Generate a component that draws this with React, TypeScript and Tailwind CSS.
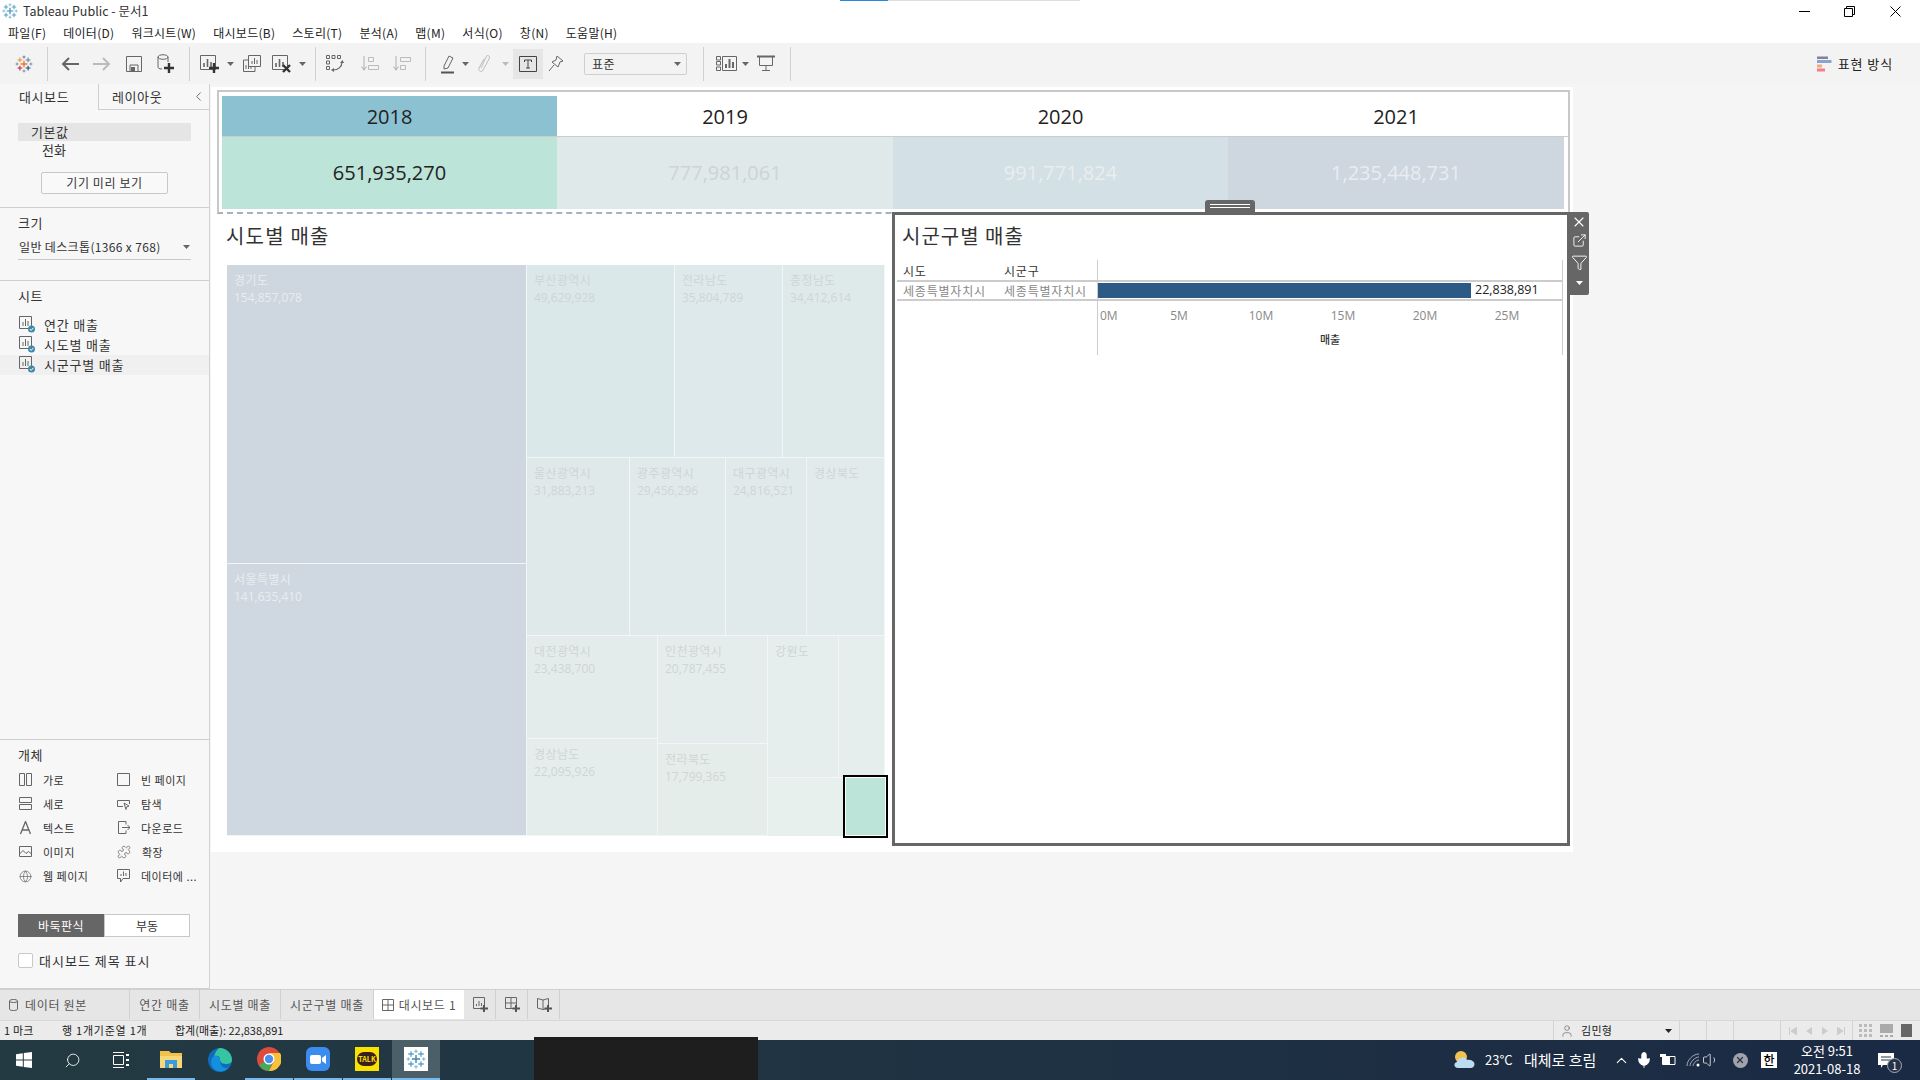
import { ChevronLeft, ChevronUp, ExternalLink, Filter, Globe, Mic, Puzzle, Search, User, Volume1, X } from 'lucide-react';

type IconProps = { c?: string };

function Svg({ w = 20, h = 20, children }: { w?: number; h?: number; children: React.ReactNode }) {
  return (
    <svg width={w} height={h} viewBox={`0 0 ${w} ${h}`} fill="none" className="shrink-0">
      {children}
    </svg>
  );
}

function Cross({ x, y, s, color, t = 1.6 }: { x: number; y: number; s: number; color: string; t?: number }) {
  return <path d={`M${x - s} ${y}H${x + s}M${x} ${y - s}V${y + s}`} stroke={color} strokeWidth={t} />;
}

function TableauLogo() {
  return (
    <svg width="18" height="18" viewBox="0 0 22 22" fill="none" className="shrink-0">
      <Cross x={11} y={11} s={4} color="#e8762d" t={1.6} />
      <Cross x={6} y={6} s={3} color="#e8962d" t={1.3} />
      <Cross x={16} y={6} s={3} color="#5b879b" t={1.3} />
      <Cross x={6} y={16} s={3} color="#c72035" t={1.3} />
      <Cross x={16} y={16} s={3} color="#1f447e" t={1.3} />
      <Cross x={11} y={2.5} s={1.8} color="#5b6591" t={1} />
      <Cross x={11} y={19.5} s={1.8} color="#5b879b" t={1} />
      <Cross x={2.5} y={11} s={1.8} color="#5f7fa8" t={1} />
      <Cross x={19.5} y={11} s={1.8} color="#59879b" t={1} />
    </svg>
  );
}

function TableauBlue({ size = 16 }: { size?: number }) {
  return (
    <svg width={size} height={size} viewBox="0 0 22 22" fill="none" className="shrink-0">
      <Cross x={11} y={11} s={4.5} color="#3d8bb5" t={1.6} />
      <Cross x={5.5} y={5.5} s={3} color="#5ba0c5" t={1.4} />
      <Cross x={16.5} y={5.5} s={3} color="#5ba0c5" t={1.4} />
      <Cross x={5.5} y={16.5} s={3} color="#5ba0c5" t={1.4} />
      <Cross x={16.5} y={16.5} s={3} color="#5ba0c5" t={1.4} />
      <Cross x={11} y={2.5} s={2} color="#7db4d0" t={1.2} />
      <Cross x={11} y={19.5} s={2} color="#7db4d0" t={1.2} />
      <Cross x={2.5} y={11} s={2} color="#7db4d0" t={1.2} />
      <Cross x={19.5} y={11} s={2} color="#7db4d0" t={1.2} />
    </svg>
  );
}

function Caret({ c = '#666' }: IconProps) {
  return (
    <Svg w={7} h={4}>
      <path d="M0 0H7L3.5 4Z" fill={c} />
    </Svg>
  );
}

function Plus({ x, y }: { x: number; y: number }) {
  return <path d={`M${x - 5} ${y}H${x + 5}M${x} ${y - 5}V${y + 5}`} stroke="#333" strokeWidth={2.4} />;
}

function ToolSep({ className }: { className: string }) {
  return <div className={`h-[34px] w-px shrink-0 bg-[#d0d0d0] ${className}`} />;
}

function Toolbar() {
  return (
    <div className="flex h-[41px] shrink-0 items-center bg-[#f3f3f3] pl-[13px]">
      <div className="flex w-[22px] justify-center">
        <TableauLogo />
      </div>
      <ToolSep className="ml-[12px]" />
      <div className="ml-[6px] flex w-[32px] justify-center">
        <Svg w={18} h={14}>
          <path d="M18 7H2M8 1L2 7L8 13" stroke="#666" strokeWidth={2} />
        </Svg>
      </div>
      <div className="flex w-[32px] justify-center">
        <Svg w={18} h={14}>
          <path d="M0 7H16M10 1L16 7L10 13" stroke="#bbb" strokeWidth={2} />
        </Svg>
      </div>
      <div className="flex w-[32px] justify-center">
        <Svg w={16} h={16}>
          <path d="M.5.5H15.5V15.5H.5Z" stroke="#666" />
          <path d="M4 15V9H12V15" stroke="#666" />
          <path d="M5 11H9V15H5Z" fill="#666" />
        </Svg>
      </div>
      <div className="flex w-[32px] justify-center">
        <Svg w={18} h={20}>
          <path d="M1 3C1 0 11 0 11 3V8M1 3V13C1 14 2 15 5 15M1 3C1 6 11 6 11 3" stroke="#666" />
          <Plus x={12} y={14} />
        </Svg>
      </div>
      <ToolSep className="ml-[7px]" />
      <div className="ml-[5px] flex w-[30px] justify-center">
        <Svg w={20} h={18}>
          <path d="M.5.5H15.5V14.5H.5Z" stroke="#666" />
          <path d="M4 12V8M7.5 12V4M11 12V7" stroke="#666" strokeWidth={1.6} />
          <Plus x={14} y={13} />
        </Svg>
      </div>
      <div className="flex w-[10px] justify-center">
        <Caret />
      </div>
      <div className="ml-[2px] flex w-[30px] justify-center">
        <Svg w={18} h={18}>
          <path d="M5.5 .5H17.5V11.5H5.5Z" stroke="#666" />
          <path d="M5 5H.5V16.5H12V12" stroke="#666" />
          <path d="M9 9V6M11.5 9V3M14 9V5M3 14V10M5.5 14V11M8 14V12" stroke="#666" />
        </Svg>
      </div>
      <div className="flex w-[30px] justify-center">
        <Svg w={20} h={18}>
          <path d="M.5.5H15.5V14.5H.5Z" stroke="#666" />
          <path d="M4 12V8M7.5 12V4M11 12V7" stroke="#666" strokeWidth={1.6} />
          <path d="M11 10L18 17M18 10L11 17" stroke="#333" strokeWidth={2.4} />
        </Svg>
      </div>
      <div className="flex w-[10px] justify-center">
        <Caret />
      </div>
      <ToolSep className="ml-[8px]" />
      <div className="ml-[4px] flex w-[30px] justify-center">
        <Svg w={18} h={18}>
          <path d="M.5.5H3.5V3.5H.5ZM6 .5H9V3.5H6ZM11.5 .5H14.5V3.5H11.5ZM.5 6H3.5V9H.5ZM.5 11.5H3.5V14.5H.5Z" stroke="#666" />
          <path d="M16 7C16 12 12 15 7 15" stroke="#666" strokeWidth={1.2} />
          <path d="M14 8L16.5 5L18 8ZM8 13V17L5 15Z" fill="#666" />
        </Svg>
      </div>
      <div className="ml-[5px] flex w-[30px] justify-center">
        <Svg w={18} h={16}>
          <path d="M3 0V13M.5 10.5L3 14L5.5 10.5" stroke="#bbb" strokeWidth={1.2} />
          <path d="M7.5 1.5H12.5V5.5H7.5ZM7.5 9.5H17.5V13.5H7.5Z" stroke="#bbb" />
        </Svg>
      </div>
      <div className="ml-[2px] flex w-[30px] justify-center">
        <Svg w={18} h={16}>
          <path d="M3 0V13M.5 10.5L3 14L5.5 10.5" stroke="#bbb" strokeWidth={1.2} />
          <path d="M7.5 1.5H17.5V5.5H7.5ZM7.5 9.5H12.5V13.5H7.5Z" stroke="#bbb" />
        </Svg>
      </div>
      <ToolSep className="ml-[8px]" />
      <div className="ml-[9px] flex w-[26px] justify-center">
        <Svg w={14} h={20}>
          <path d="M3 12L8 2L12 4L7 14L3 15Z" stroke="#666" />
          <path d="M0 18.5H13" stroke="#555" strokeWidth={2} />
        </Svg>
      </div>
      <div className="flex w-[9px] justify-center">
        <Caret />
      </div>
      <div className="ml-[1px] flex w-[26px] justify-center">
        <Svg w={14} h={20}>
          <path d="M4 14L9 3C10 0 14 2 12 5L6 16C5 19 1 17 2 14L7 5" stroke="#bbb" />
        </Svg>
      </div>
      <div className="ml-[3px] flex w-[10px] justify-center">
        <Caret c="#bbb" />
      </div>
      <div className="ml-[3px] flex h-[30px] w-[30px] items-center justify-center bg-[#e6e6e6]">
        <Svg w={18} h={16}>
          <path d="M.5.5H17.5V15.5H.5Z" stroke="#444" />
          <path d="M5.5 6V4H12.5V6M9 4V12M7 12H11" stroke="#444" />
        </Svg>
      </div>
      <div className="flex w-[26px] justify-center">
        <Svg w={16} h={18}>
          <path d="M9 1L15 6L12 7L10 12L4 7L8 5ZM6 10L1 16" stroke="#666" />
        </Svg>
      </div>
      <div className="ml-[15px] flex h-[22px] w-[103px] items-center justify-between rounded-[2px] border border-[#cfcfcf] bg-[#f3f3f3] pr-[5px] pl-[7px] text-[12px] tracking-[0.4px] text-[#333]">
        표준
        <Caret />
      </div>
      <ToolSep className="ml-[16px]" />
      <div className="ml-[12px]">
        <Svg w={21} h={15}>
          <path d="M.5.5H4.5V4H.5ZM.5 5.5H4.5V9H.5ZM.5 11H4.5V14.5H.5Z" stroke="#666" />
          <path d="M6.5.5H20.5V14.5H6.5Z" stroke="#666" />
          <path d="M10 12V8M13.5 12V3M17 12V6" stroke="#666" strokeWidth={2} />
        </Svg>
      </div>
      <div className="ml-[3px] flex w-[10px] justify-center">
        <Caret />
      </div>
      <div className="ml-[7px]">
        <Svg w={18} h={17}>
          <path d="M0 1.5H18" stroke="#666" strokeWidth={2} />
          <path d="M2.5 2V10.5H15.5V2M9 11V15M5 15.5H13" stroke="#666" />
        </Svg>
      </div>
      <ToolSep className="ml-[15px]" />
      <div className="ml-auto flex items-center gap-[6px] pr-[27px] text-[13px] tracking-[0.9px] text-[#222]">
        <svg width="15" height="16" viewBox="0 0 15 16" className="shrink-0">
          <path d="M0 .5H11V3H0Z" fill="#8e7ba0" />
          <path d="M0 4H14.5V7H0Z" fill="#84a7cf" />
          <path d="M0 8.5H5V11.5H0Z" fill="#f3a97c" />
          <path d="M0 12.5H8V15.5H0Z" fill="#f27f86" />
        </svg>
        표현 방식
      </div>
    </div>
  );
}

function SheetIcon() {
  return (
    <Svg w={17} h={17}>
      <path d="M.5.5H12.5V12.5H.5Z" stroke="#666" />
      <path d="M4 10V6M6.5 10V3M9 10V5" stroke="#666" />
      <circle cx={12.5} cy={13} r={3.5} fill="#3f88a8" />
      <path d="M10.8 13L12.2 14.4L14.4 11.8" stroke="#fff" />
    </Svg>
  );
}

function LeftPanel() {
  const sheets = ['연간 매출', '시도별 매출', '시군구별 매출'];
  return (
    <div className="flex w-[210px] shrink-0 flex-col border-r border-[#d2d2d2] bg-[#f7f7f7] text-[13px] text-[#333]">
      <div className="flex h-[26px] shrink-0">
        <div className="flex w-[98px] items-center pl-[19px] tracking-[0.6px]">대시보드</div>
        <div className="flex flex-1 items-center justify-between border-b border-l border-[#cfcfcf] pr-[3px] pl-[13px] tracking-[0.6px]">
          레이아웃
          <ChevronLeft size={15} strokeWidth={1.5} color="#666" />
        </div>
      </div>
      <div className="h-[98px] shrink-0 border-b border-[#d0d0d0] pt-[13px]">
        <div className="mx-[18px] flex h-[18px] items-center bg-[#e5e5e5] pb-[1px] pl-[13px] tracking-[0.5px]">기본값</div>
        <div className="flex h-[18px] items-center pb-[1px] pl-[42px]">전화</div>
        <div className="mt-[13px] ml-[41px] flex h-[22px] w-[127px] items-center justify-center rounded-[2px] border border-[#c8c8c8] bg-[#f9f9f9] text-[12px] tracking-[0.6px]">
          기기 미리 보기
        </div>
      </div>
      <div className="h-[73px] shrink-0 border-b border-[#d0d0d0] px-[18px] pt-[6px]">
        <div className="h-[18px] leading-[17px] tracking-[0.5px]">크기</div>
        <div className="mt-[6px] flex h-[22px] items-center justify-between border-b border-[#c8c8c8] pr-[1px] pb-[3px] pl-[1px] text-[12px] tracking-[0.35px]">
          일반 데스크톱(1366 x 768)
          <Caret />
        </div>
      </div>
      <div className="h-[459px] shrink-0 border-b border-[#d0d0d0] pt-[6px]">
        <div className="h-[18px] pl-[18px] leading-[17px] tracking-[0.5px]">시트</div>
        <div className="mt-[10px]">
          {sheets.map((s, i) => (
            <div
              key={s}
              className={`flex h-[20px] items-center gap-[8px] pb-[1px] pl-[19px] tracking-[0.8px] ${i === 2 ? 'bg-[#f0f0f0]' : ''}`}
            >
              <SheetIcon />
              {s}
            </div>
          ))}
        </div>
      </div>
      <div className="flex-1 border-b border-[#d0d0d0] pt-[6px]">
        <div className="h-[18px] pl-[18px] leading-[17px] tracking-[0.5px]">개체</div>
        <div className="mt-[4px] grid grid-cols-[98px_1fr] pl-[19px] text-[11px] tracking-[0.5px] text-[#333]">
          <ObjItem label="가로">
            <path d="M.5.5H5.5V12.5H.5ZM7.5.5H12.5V12.5H7.5Z" stroke="#666" />
          </ObjItem>
          <ObjItem label="빈 페이지">
            <path d="M.5.5H12.5V12.5H.5Z" stroke="#666" />
          </ObjItem>
          <ObjItem label="세로">
            <path d="M.5.5H12.5V5.5H.5ZM.5 7.5H12.5V12.5H.5Z" stroke="#666" />
          </ObjItem>
          <ObjItem label="탐색">
            <path d="M6 9.5H.5V3.5H12.5V7M7 6L12 9L9.5 10L9 12.5Z" stroke="#666" fill="none" />
          </ObjItem>
          <ObjItem label="텍스트">
            <path d="M1.5 13L6.5.5L11.5 13M3.5 9H9.5" stroke="#666" strokeWidth={1.3} />
          </ObjItem>
          <ObjItem label="다운로드">
            <path d="M9 3.5V.5H1.5V12.5H9V9.5M5 6.5H13M10.5 4L13 6.5L10.5 9" stroke="#666" />
          </ObjItem>
          <ObjItem label="이미지">
            <path d="M.5 1.5H12.5V11.5H.5ZM.5 9L4 5.5L7 8.5L9.5 6.5L12.5 9" stroke="#666" />
          </ObjItem>
          <div className="flex h-[24px] items-center gap-[11px]">
            <Puzzle size={14} strokeWidth={1.3} color="#666" />
            확장
          </div>
          <div className="flex h-[24px] items-center gap-[11px]">
            <Globe size={13} strokeWidth={1.3} color="#666" />
            웹 페이지
          </div>
          <ObjItem label="데이터에 ...">
            <path d="M.5.5H12.5V9.5H6L3.5 13V9.5H.5ZM4 7V5M6.5 7V2.5M9 7V4" stroke="#666" fill="none" />
          </ObjItem>
        </div>
        <div className="mt-[26px] ml-[18px] flex h-[23px] w-[172px] text-[12px]">
          <div className="flex w-[86px] items-center justify-center bg-[#666] tracking-[0.5px] text-white">바둑판식</div>
          <div className="flex flex-1 items-center justify-center border border-[#c8c8c8] bg-white">부동</div>
        </div>
        <div className="mt-[14px] ml-[18px] flex items-center gap-[6px] text-[13px] tracking-[1px]">
          <div className="h-[15px] w-[15px] rounded-[2px] border border-[#c8c8c8] bg-white" />
          대시보드 제목 표시
        </div>
      </div>
    </div>
  );
}

function ObjItem({ label, children }: { label: string; children: React.ReactNode }) {
  return (
    <div className="flex h-[24px] items-center gap-[11px]">
      <Svg w={13} h={14}>
        {children}
      </Svg>
      {label}
    </div>
  );
}

function YearCell({ year, active, className }: { year: string; active?: boolean; className: string }) {
  return (
    <div
      className={`flex items-center justify-center pt-[2px] text-[20px] font-medium text-[#222] ${className} ${active ? 'bg-[#8cc1d2]' : 'bg-white'}`}
    >
      {year}
    </div>
  );
}

function Cell({
  name,
  value,
  className,
}: {
  name?: string;
  value?: string;
  className: string;
}) {
  return (
    <div className={`border-r border-b border-[#f2f6f6] pt-[7px] pl-[7px] text-[12px] leading-[17px] ${className}`}>
      {name && <div className="tracking-[0.4px]">{name}</div>}
      {value && <div>{value}</div>}
    </div>
  );
}

function Treemap() {
  return (
    <div className="ml-[10px] flex h-[571px] w-[658px] text-[#cfd5d5]">
      <div className="flex w-[300px] flex-col text-[#e9edf0]">
        <Cell name="경기도" value="154,857,078" className="h-[299px] bg-[#ced6df]" />
        <Cell name="서울특별시" value="141,635,410" className="flex-1 bg-[#cfd8e1]" />
      </div>
      <div className="flex flex-1 flex-col">
        <div className="flex h-[193px]">
          <Cell name="부산광역시" value="49,629,928" className="w-[148px] bg-[#dbe8e9]" />
          <Cell name="전라남도" value="35,804,789" className="w-[108px] bg-[#dde9ea]" />
          <Cell name="충청남도" value="34,412,614" className="flex-1 bg-[#deeaea]" />
        </div>
        <div className="flex h-[178px]">
          <Cell name="울산광역시" value="31,883,213" className="w-[103px] bg-[#e0e9ea]" />
          <Cell name="광주광역시" value="29,456,296" className="w-[96px] bg-[#e1eaea]" />
          <Cell name="대구광역시" value="24,816,521" className="w-[81px] bg-[#e1eaea]" />
          <Cell name="경상북도" className="flex-1 bg-[#e2ebeb]" />
        </div>
        <div className="flex flex-1">
          <div className="flex w-[131px] flex-col">
            <Cell name="대전광역시" value="23,438,700" className="h-[103px] bg-[#e3eceb]" />
            <Cell name="경상남도" value="22,095,926" className="flex-1 bg-[#e4edec]" />
          </div>
          <div className="flex w-[110px] flex-col">
            <Cell name="인천광역시" value="20,787,455" className="h-[108px] bg-[#e4edeb]" />
            <Cell name="전라북도" value="17,799,365" className="flex-1 bg-[#e5edeb]" />
          </div>
          <div className="flex flex-1 flex-col">
            <div className="flex h-[142px]">
              <Cell name="강원도" className="w-[71px] bg-[#e5eeec]" />
              <Cell className="flex-1 bg-[#e5eeec]" />
            </div>
            <div className="relative flex-1 bg-[#e7f0ed]">
              <div className="absolute top-[-3px] right-[-3px] bottom-[-2px] w-[45px] border-[2px] border-black bg-[#bce4d8] shadow-[inset_0_0_0_1px_#fff]" />
            </div>
          </div>
        </div>
      </div>
    </div>
  );
}

function RegionSheet() {
  return (
    <div className="relative -mt-[2px] ml-auto h-[634px] w-[678px] border-[3px] border-[#666] bg-white">
      <div className="absolute top-[-15px] left-[310px] flex h-[12px] w-[50px] flex-col items-center justify-center gap-[2px] rounded-t-[3px] bg-[#666]">
        <div className="h-px w-[40px] bg-white" />
        <div className="h-px w-[40px] bg-white" />
      </div>
      <div className="absolute top-[-3px] right-[-22px] flex h-[83px] w-[20px] flex-col items-center rounded-r-[2px] bg-[#666] pt-[2px] text-white">
        <X size={16} strokeWidth={1.6} />
        <ExternalLink size={15} strokeWidth={1.4} className="mt-[3px]" />
        <Filter size={17} strokeWidth={1.3} className="mt-[6px]" />
        <div className="mt-[10px]">
          <Caret c="#fff" />
        </div>
      </div>
      <div className="flex h-[45px] items-center pb-[3px] pl-[7px] text-[20px] tracking-[1px] text-[#333]">시군구별 매출</div>
      <div className="ml-[2px] w-[666px] border-r border-[#ccc] text-[12px]">
        <div className="flex h-[22px] border-b-2 border-[#ccc] text-[#333]">
          <div className="flex w-[107px] items-center pt-[1px] pl-[6px] tracking-[0.8px]">시도</div>
          <div className="flex w-[93px] items-center pt-[1px] tracking-[0.8px]">시군구</div>
          <div className="flex-1 border-l border-[#ccc]" />
        </div>
        <div className="flex h-[19px] border-b-2 border-[#ccc] text-[#888]">
          <div className="flex w-[107px] items-center pl-[6px] tracking-[0.8px]">세종특별자치시</div>
          <div className="flex w-[93px] items-center tracking-[0.8px] whitespace-nowrap">세종특별자치시</div>
          <div className="flex flex-1 items-center border-l border-[#ccc]">
            <div className="h-[15px] w-[373px] bg-[#2b5a86]" />
            <div className="ml-[4px] font-['Open_Sans',sans-serif] text-[12.5px] text-[#222]">22,838,891</div>
          </div>
        </div>
        <div className="flex h-[54px]">
          <div className="w-[200px]" />
          <div className="flex-1 border-l border-[#ccc] font-['Open_Sans',sans-serif] text-[12px] text-[#888]">
            <div className="flex h-[24px] items-end">
              <div className="w-[40px] pl-[2px]">0M</div>
              <div className="w-[82px] text-center">5M</div>
              <div className="w-[82px] text-center">10M</div>
              <div className="w-[82px] text-center">15M</div>
              <div className="w-[82px] text-center">20M</div>
              <div className="w-[82px] text-center">25M</div>
            </div>
            <div className="mt-[6px] text-center font-['Noto_Sans_CJK_KR',sans-serif] text-[11px] font-medium text-[#333]">매출</div>
          </div>
        </div>
      </div>
    </div>
  );
}

function Dashboard() {
  return (
    <div className="ml-px h-[765px] w-[1362px] bg-white pt-[3px] pl-[6px]">
      <div className="h-[124px] w-[1353px] border-2 border-b-2 border-[#c8c8c8] border-b-[#aab0c2] pt-[4px] pl-[3px] [border-bottom-style:dashed]">
        <div className="flex h-[41px] border-b border-[#ccc] font-['Open_Sans',sans-serif]">
          <YearCell year="2018" active className="w-[335px]" />
          <YearCell year="2019" className="w-[336px]" />
          <YearCell year="2020" className="w-[335px]" />
          <YearCell year="2021" className="w-[336px]" />
        </div>
        <div className="flex h-[72px] font-['Open_Sans',sans-serif] text-[20px]">
          <div className="flex w-[335px] items-center justify-center bg-[#bce4d8] text-[#222]">651,935,270</div>
          <div className="flex w-[336px] items-center justify-center bg-[#dfe9e9] text-[#ced4d4]">777,981,061</div>
          <div className="flex w-[335px] items-center justify-center bg-[#d3e0e5] text-[#e9eef0]">991,771,824</div>
          <div className="flex w-[336px] items-center justify-center bg-[#ced6df] text-[#e9edf1]">1,235,448,731</div>
        </div>
      </div>
      <div className="flex w-[1353px]">
        <div className="w-[675px] shrink-0">
          <div className="flex h-[51px] items-center pb-[8px] pl-[9px] text-[20px] tracking-[1.2px] text-[#333]">시도별 매출</div>
          <div className="font-['Open_Sans','Noto_Sans_CJK_KR',sans-serif]">
            <Treemap />
          </div>
        </div>
        <RegionSheet />
      </div>
    </div>
  );
}

function BottomTabs() {
  return (
    <div className="flex h-[31px] shrink-0 border-t border-[#d0d0d0] bg-[#e6e6e6] pb-[1px] text-[12px] tracking-[0.7px] text-[#555]">
      <div className="flex w-[130px] items-center gap-[5px] border-r border-[#d0d0d0] pl-[9px]">
        <Svg w={9} h={12}>
          <path d="M.5 2C.5 0 8.5 0 8.5 2V10C8.5 12 .5 12 .5 10ZM.5 2C.5 4 8.5 4 8.5 2" stroke="#666" />
        </Svg>
        <span className="ml-[2px]">데이터 원본</span>
      </div>
      <div className="flex w-[70px] items-center justify-center border-r border-[#d0d0d0]">연간 매출</div>
      <div className="flex w-[81px] items-center justify-center border-r border-[#d0d0d0]">시도별 매출</div>
      <div className="flex w-[93px] items-center justify-center border-r border-[#d0d0d0]">시군구별 매출</div>
      <div className="flex w-[90px] items-center justify-center gap-[5px] bg-white">
        <Svg w={12} h={12}>
          <path d="M.5.5H11.5V11.5H.5ZM6 .5V11.5M.5 6H11.5" stroke="#666" />
        </Svg>
        대시보드 1
      </div>
      <div className="flex w-[32px] items-center justify-center border-r border-[#d0d0d0] pl-[3px]">
        <Svg w={16} h={16}>
          <path d="M.5.5H11.5V11.5H.5ZM3.5 9V7M6 9V4M8.5 9V6" stroke="#666" />
          <path d="M11 8V15M7.5 11.5H15" stroke="#555" strokeWidth={2} />
        </Svg>
      </div>
      <div className="flex w-[32px] items-center justify-center border-r border-[#d0d0d0] pl-[3px]">
        <Svg w={16} h={16}>
          <path d="M.5.5H11.5V11.5H.5ZM6 .5V11.5M.5 6H11.5" stroke="#666" />
          <path d="M11 8V15M7.5 11.5H15" stroke="#555" strokeWidth={2} />
        </Svg>
      </div>
      <div className="flex w-[32px] items-center justify-center border-r border-[#d0d0d0] pl-[3px]">
        <Svg w={16} h={16}>
          <path d="M.5 1.5L6 3L11.5 1.5V11L6 12.5L.5 11ZM6 3V12.5" stroke="#666" />
          <path d="M11 8V15M7.5 11.5H15" stroke="#555" strokeWidth={2} />
        </Svg>
      </div>
    </div>
  );
}

function StatusBar() {
  return (
    <div className="flex h-[20px] shrink-0 items-center border-t border-[#d8d8d8] bg-[#ebebeb] text-[11px] text-[#222]">
      <div className="w-[62px] pl-[4px] tracking-[0.2px]">1 마크</div>
      <div className="w-[113px] tracking-[0.75px]">행 1개기준열 1개</div>
      <div className="w-[1378px]">합계(매출): 22,838,891</div>
      <div className="flex h-full w-[127px] items-center border-x border-[#d4d4d4] pr-[7px] pl-[6px]">
        <User size={14} strokeWidth={1} color="#555" />
        <span className="ml-[7px] flex-1 tracking-[0.3px]">김민형</span>
        <Caret c="#222" />
      </div>
      <div className="h-full w-[27px] border-r border-[#d4d4d4]" />
      <div className="h-full w-[27px] border-r border-[#d4d4d4]" />
      <div className="h-full w-[47px] border-r border-[#d4d4d4]" />
      <div className="flex h-full w-[72px] items-center justify-center gap-[8px] border-r border-[#d4d4d4]">
        <Svg w={8} h={8}>
          <path d="M.5 0V8M8 0V8L2 4Z" stroke="#ccc" fill="#ccc" />
        </Svg>
        <Svg w={8} h={8}>
          <path d="M7 0V8L1 4Z" fill="#ccc" />
        </Svg>
        <Svg w={8} h={8}>
          <path d="M1 0V8L7 4Z" fill="#ccc" />
        </Svg>
        <Svg w={8} h={8}>
          <path d="M7.5 0V8M0 0V8L6 4Z" stroke="#ccc" fill="#ccc" />
        </Svg>
      </div>
      <div className="flex flex-1 items-center justify-center gap-[8px] pr-[2px]">
        <svg width="13" height="13" viewBox="0 0 13 13" className="shrink-0">
          <path
            d="M0 0H3V3H0ZM5 0H8V3H5ZM10 0H13V3H10ZM0 5H3V8H0ZM5 5H8V8H5ZM10 5H13V8H10ZM0 10H3V13H0ZM5 10H8V13H5ZM10 10H13V13H10Z"
            fill="#bbb"
          />
        </svg>
        <svg width="13" height="13" viewBox="0 0 13 13" className="shrink-0">
          <path d="M0 0H13V9H0ZM0 11H3V13H0ZM5 11H8V13H5ZM10 11H13V13H10Z" fill="#aaa" />
        </svg>
        <div className="h-[13px] w-[11px] bg-[#666]" />
      </div>
    </div>
  );
}

function Taskbar() {
  const slot = 'flex h-full w-[48px] shrink-0 items-center justify-center';
  const lined = 'border-b-[2px] border-[#76b9ed]';
  return (
    <div className="flex h-[40px] shrink-0 bg-linear-to-r from-[#233a42] to-[#1b2a44] text-white">
      <div className={slot}>
        <Svg w={16} h={16}>
          <path d="M0 2.2L6.8 1.2V7.5H0ZM7.8 1L16 0V7.5H7.8ZM0 8.5H6.8V14.8L0 13.8ZM7.8 8.5H16V16L7.8 15Z" fill="#fff" />
        </Svg>
      </div>
      <div className={slot}>
        <div className="-scale-x-100">
          <Search size={17} strokeWidth={1.2} />
        </div>
      </div>
      <div className={slot}>
        <Svg w={18} h={18}>
          <path d="M2.5 4.5H12.5V13.5H2.5ZM2 1.5H13M2 16.5H13" stroke="#fff" />
          <path d="M15 3H18V5H15ZM15 8H18V10H15ZM15 13H18V15H15Z" fill="#fff" />
        </Svg>
      </div>
      <div className={`${slot} ml-[3px] ${lined}`}>
        <Svg w={22} h={20}>
          <path d="M0 2H9L11 4H22V19H0Z" fill="#f0c24c" />
          <path d="M0 7H22V19H0Z" fill="#f7d878" />
          <path d="M5 11H17V19H13V15H9V19H5Z" fill="#3b9bdc" />
        </Svg>
      </div>
      <div className={`${slot} ml-px`}>
        <Svg w={24} h={24}>
          <circle cx={12} cy={12} r={12} fill="#0f6cbd" />
          <path d="M12 0C18 0 24 5 24 12C24 15 21 16 18 16C13 16 12 13 12 11C12 8 9 7 6 8C8 3 10 0 12 0Z" fill="#36c5a0" />
          <path d="M12 12C12 17 15 21 20 20C17 24 9 25 5 20C2 16 3 10 6 8C9 7 12 9 12 12Z" fill="#1490df" />
        </Svg>
      </div>
      <div className={`${slot} ml-px ${lined}`}>
        <Svg w={24} h={24}>
          <circle cx={12} cy={12} r={12} fill="#dd4b3e" />
          <path d="M12 12L2 18A12 12 0 0 0 12 24L17 12Z" fill="#4aa85a" />
          <path d="M12 6H23A12 12 0 0 1 12 24L17 14Z" fill="#f6c239" />
          <circle cx={12} cy={12} r={5.5} fill="#fff" />
          <circle cx={12} cy={12} r={4.2} fill="#4a8ff0" />
        </Svg>
      </div>
      <div className={`${slot} ml-px ${lined}`}>
        <Svg w={24} h={24}>
          <rect width={24} height={24} rx={6} fill="#3c8cf0" />
          <rect x={4} y={8} width={11} height={9} rx={2} fill="#fff" />
          <path d="M16 11L20 8V17L16 14Z" fill="#fff" />
        </Svg>
      </div>
      <div className={`${slot} ml-px ${lined}`}>
        <div className="flex h-[24px] w-[24px] items-center justify-center bg-[#fae100]">
          <div className="flex h-[14px] w-[20px] items-center justify-center rounded-full bg-[#3c1e1e] text-[7px] font-bold text-[#fae100]">
            TALK
          </div>
        </div>
      </div>
      <div className={`${slot} ml-px bg-[#4b5f68] ${lined}`}>
        <div className="flex h-[24px] w-[24px] items-center justify-center bg-white">
          <TableauBlue size={20} />
        </div>
      </div>
      <div className="-mt-[3px] ml-[94px] w-[224px] shrink-0 bg-[#1e1e1e]" />
      <div className="ml-auto flex w-[467px] shrink-0 items-center text-[14px]">
        <Svg w={23} h={20}>
          <circle cx={8} cy={7} r={6} fill="#f3c14f" />
          <path d="M5 18C1 18 0 13 4 12C5 7 12 6 14 10C19 9 23 13 21 16C20 18 18 18 17 18Z" fill="#bcdcf2" />
        </Svg>
        <div className="ml-[9px] w-[39px] text-[13px]">23°C</div>
        <div className="w-[73px] text-[15px] whitespace-nowrap">대체로 흐림</div>
        <div className="ml-[12px] flex w-[24px] justify-center">
          <ChevronUp size={17} strokeWidth={1.5} />
        </div>
        <div className="flex w-[22px] justify-center">
          <Mic size={18} strokeWidth={1.2} fill="#fff" />
        </div>
        <div className="flex w-[26px] justify-center">
          <Svg w={16} h={12}>
            <path d="M2.5 2.5H15V10.5H2.5Z" stroke="#fff" />
            <path d="M3 3H10V10H3ZM0 0H6V3H0Z" fill="#fff" />
          </Svg>
        </div>
        <div className="flex w-[24px] justify-center">
          <Svg w={14} h={14}>
            <path d="M1 13C1 7 7 1 13 1M4 13C4 9 9 4 13 4M7 13C7 11 10 7 13 7" stroke="#aab" />
            <circle cx={12} cy={12} r={1.5} fill="#fff" />
          </Svg>
        </div>
        <div className="flex w-[12px] justify-center overflow-visible">
          <Volume1 size={18} strokeWidth={1} className="shrink-0" />
        </div>
        <div className="ml-[12px] flex w-[22px] justify-center">
          <div className="flex h-[15px] w-[15px] items-center justify-center rounded-full bg-[#a0a4aa]">
            <X size={10} strokeWidth={3} color="#26324a" />
          </div>
        </div>
        <div className="ml-[10px] flex h-[16px] w-[16px] items-center justify-center bg-white text-[12px] font-medium text-black">
          한
        </div>
        <div className="ml-[15px] w-[70px] pb-[1px] text-center text-[13px] leading-[18px]">
          <div>오전 9:51</div>
          <div className="whitespace-nowrap">2021-08-18</div>
        </div>
        <div className="relative ml-[8px] flex w-[32px] justify-center">
          <Svg w={16} h={15}>
            <path d="M0 0H16V12H5L3 15V12H0Z" fill="#fff" />
            <path d="M3 4H13M3 7H13" stroke="#26324a" />
          </Svg>
          <div className="absolute top-[5px] left-[17px] flex h-[15px] w-[15px] items-center justify-center rounded-full border border-[#aaa] bg-[#26324a] text-[10px]">
            1
          </div>
        </div>
      </div>
    </div>
  );
}

export default function App() {
  return (
    <div className="relative flex h-[1080px] w-[1920px] flex-col overflow-hidden bg-[#f5f5f5] font-['Noto_Sans_CJK_KR','Noto_Sans',sans-serif]">
      {/* title + menu */}
      <div className="absolute top-0 left-[840px] h-px w-[240px] bg-[#ddd]">
        <div className="h-px w-[48px] bg-[#2b88d8]" />
      </div>
      <div className="flex h-[22px] shrink-0 items-center bg-white pl-[2px] text-[12.5px] text-[#333]">
        <TableauBlue size={16} />
        <span className="ml-[5px]">Tableau Public - 문서1</span>
        <div className="ml-auto flex items-center">
          <div className="h-px w-[11px] bg-black" />
          <div className="ml-[34px]">
            <Svg w={11} h={11}>
              <path d="M.5 2.5H8.5V10.5H.5ZM2.5 2.5V.5H10.5V8.5H8.5" stroke="#000" />
            </Svg>
          </div>
          <div className="ml-[35px] mr-[19px]">
            <Svg w={11} h={11}>
              <path d="M.5.5L10.5 10.5M10.5.5L.5 10.5" stroke="#000" />
            </Svg>
          </div>
        </div>
      </div>
      <div className="flex h-[21px] shrink-0 items-center gap-[17px] bg-white pl-[8px] text-[12px] tracking-[0.28px] text-[#222]">
        <span>파일(F)</span>
        <span>데이터(D)</span>
        <span>워크시트(W)</span>
        <span>대시보드(B)</span>
        <span>스토리(T)</span>
        <span>분석(A)</span>
        <span>맵(M)</span>
        <span>서식(O)</span>
        <span>창(N)</span>
        <span>도움말(H)</span>
      </div>
      <Toolbar />
      <div className="flex min-h-0 flex-1">
        <LeftPanel />
        <div className="flex-1 pt-[3px]">
          <Dashboard />
        </div>
      </div>
      <BottomTabs />
      <StatusBar />
      <Taskbar />
    </div>
  );
}
